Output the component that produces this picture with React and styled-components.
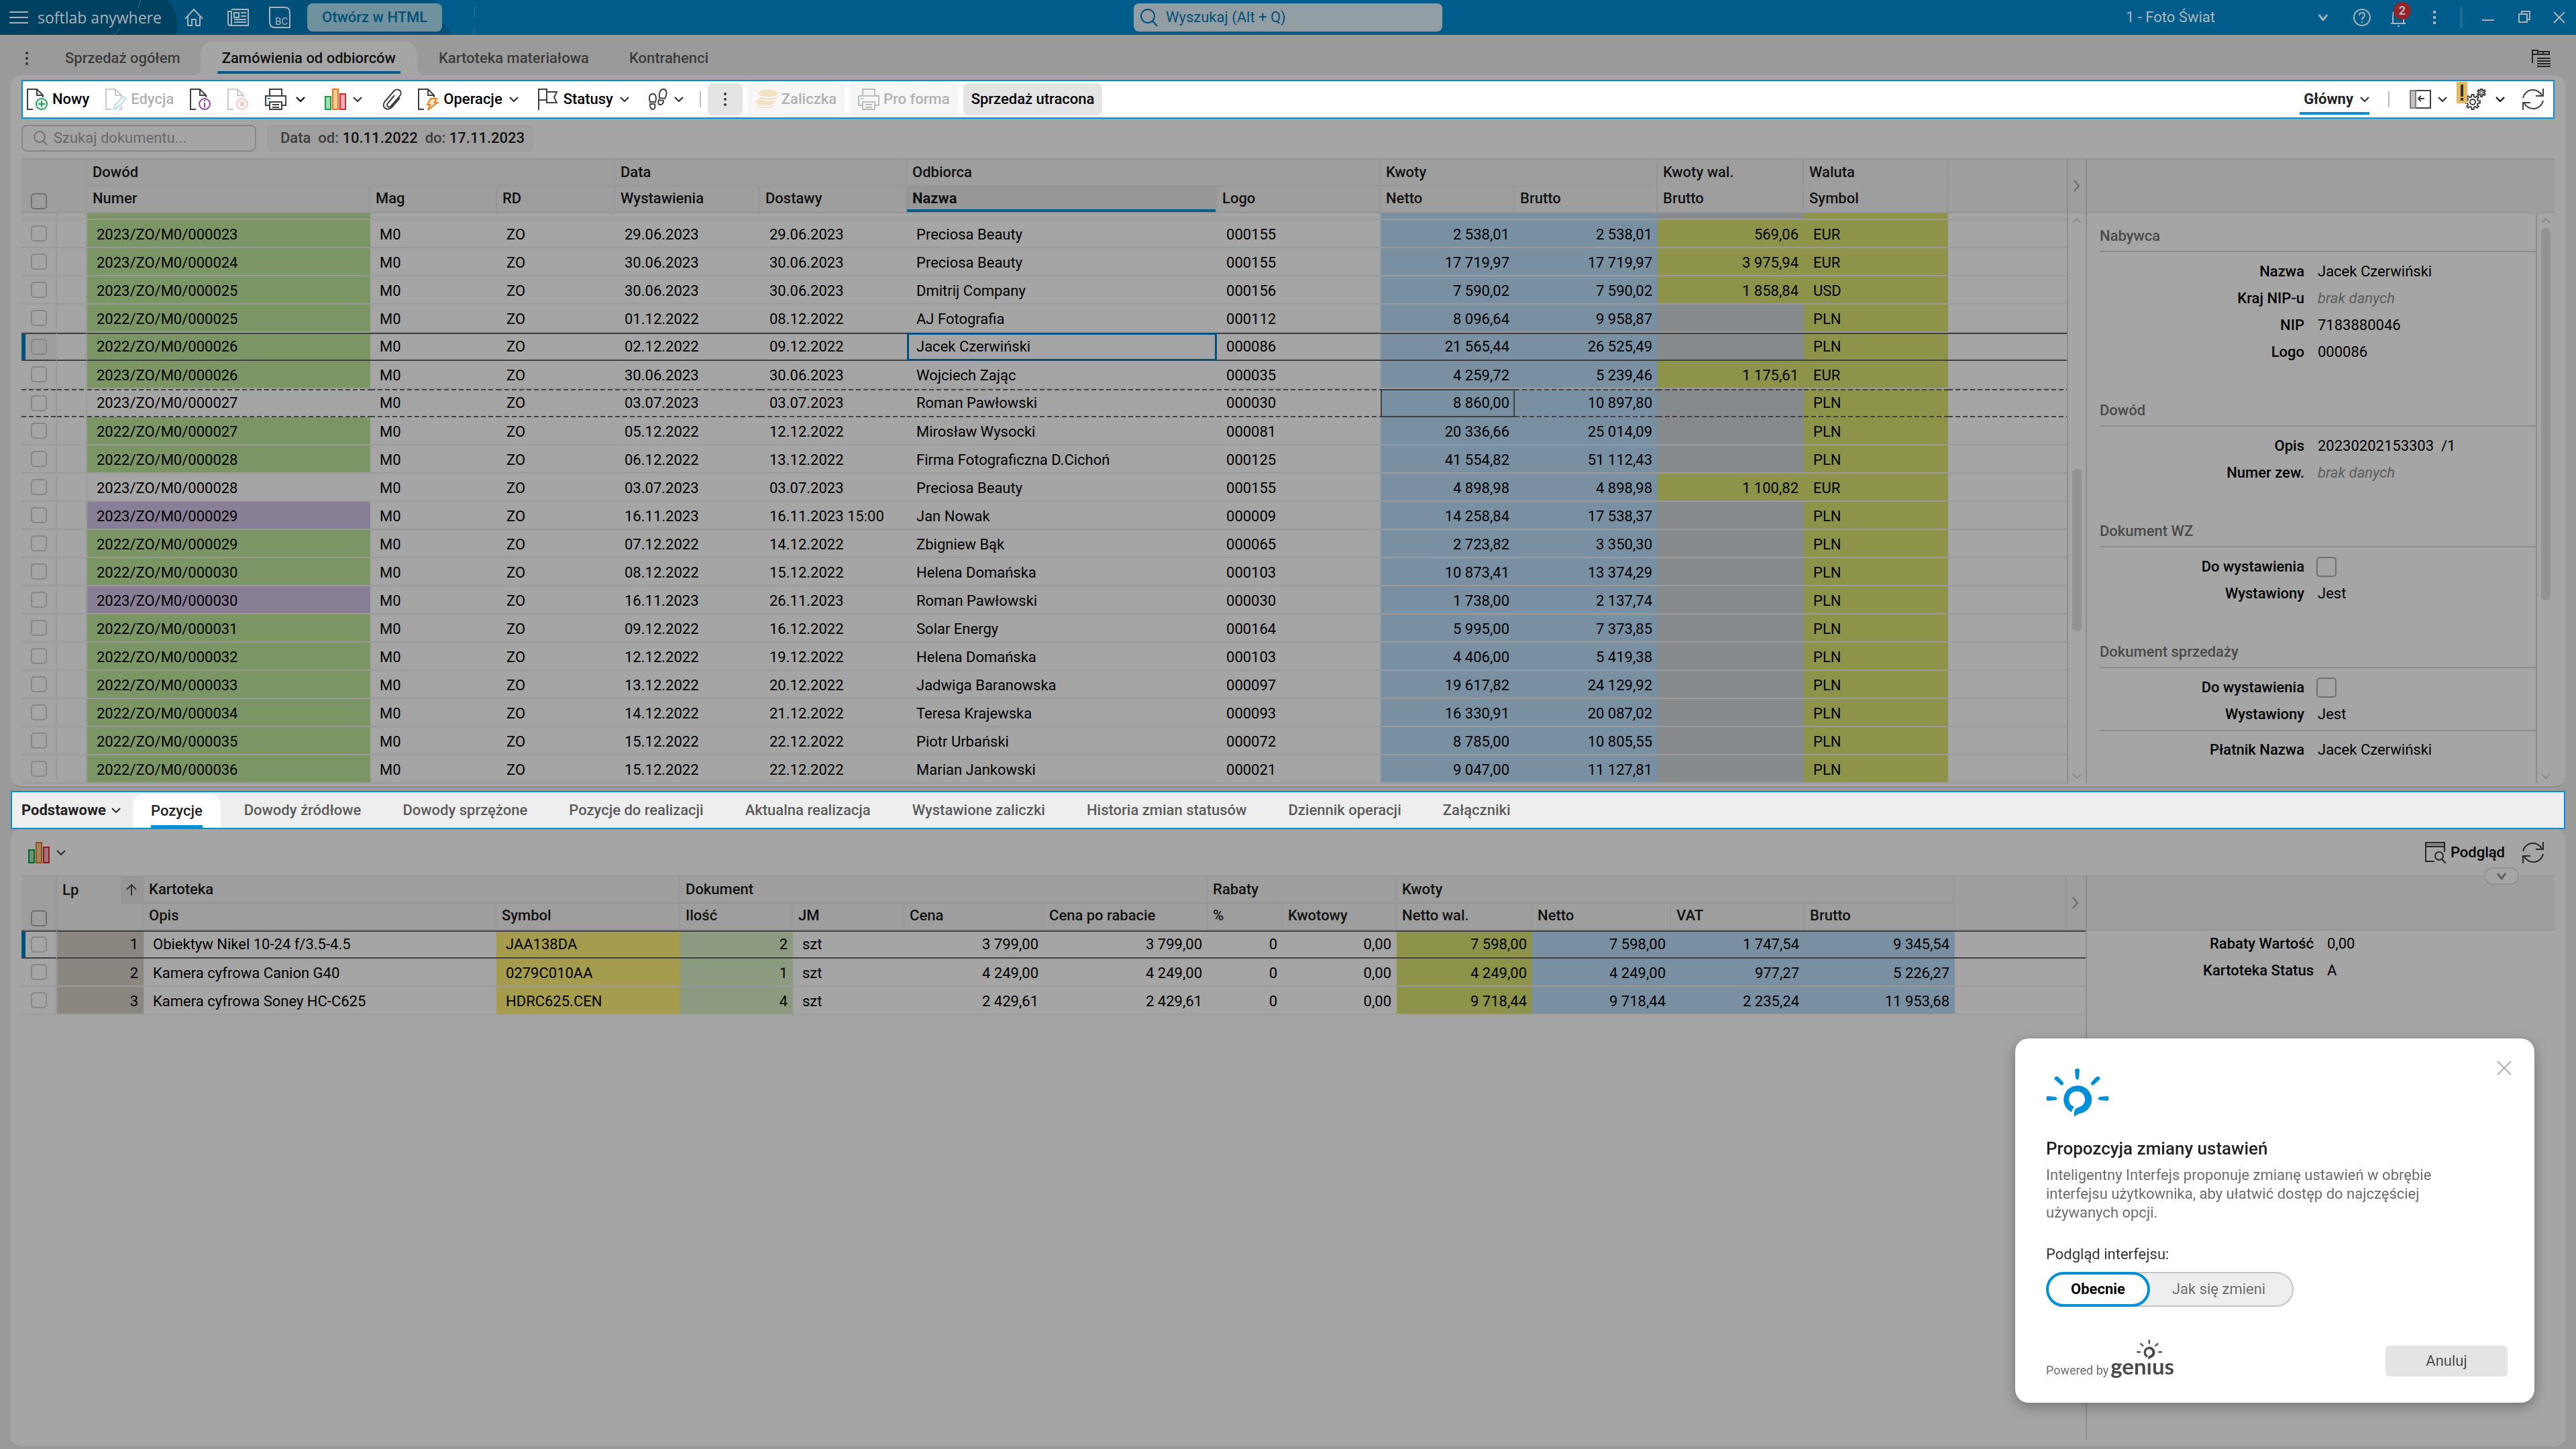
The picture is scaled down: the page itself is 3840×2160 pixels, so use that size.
import React from "react";
import styled, { createGlobalStyle, css } from "styled-components";

const c = {
  page: "#9a9a9a",
  panel: "#a5a5a5",
  head: "#9e9e9e",
  headActive: "#979797",
  line: "#9b9b9b",
  headLine: "#969696",
  edge: "#8c8c8c",
  ink: "#121212",
  accent: "#005e8c",
  bright: "#0090d7",
  light: "#a9b3b8",
  green: "#7b9664",
  purple: "#887e95",
  blue: "#7990a3",
  gray: "#868a8c",
  olive: "#8d944a",
  yellow: "#a59c4d",
  taupe: "#8a8680",
  sage: "#8c9a80",
};

const GlobalStyle = createGlobalStyle`
  * { box-sizing: border-box; }
  body {
    margin: 0;
    background: ${c.page};
    font-family: Roboto, "Liberation Sans", sans-serif;
    font-size: 22px;
    line-height: 28px;
    color: #000;
  }
  button, input, select {
    font: inherit;
    color: inherit;
  }
  button {
    border: 0;
    padding: 0;
    background: none;
  }
  svg { display: block; flex: none; }
`;

const Page = styled.div`
  min-height: 100vh;
  display: flex;
  flex-direction: column;
`;

/* ---------- top bar ---------- */

const TopBar = styled.header`
  position: relative;
  height: 52px;
  display: flex;
  align-items: center;
  background: #005c8a;
  color: ${c.light};
`;

const TopArt = styled.svg`
  position: absolute;
  left: 0;
  top: 0;
`;

const TopSide = styled.div`
  position: relative;
  flex: 1;
  display: flex;
  align-items: center;
  justify-content: ${(p) => (p.$end ? "flex-end" : "flex-start")};
`;

const MenuButton = styled.button`
  padding: 0 14px;
`;

const Brand = styled.span`
  font-family: "Open Sans", "Noto Sans", sans-serif;
  font-size: 23px;
  width: 200px;
  white-space: nowrap;
`;

const TopIcon = styled.button`
  width: ${(p) => p.$w || 54}px;
  height: 52px;
  display: flex;
  align-items: center;
  justify-content: center;
  position: relative;
`;

const OpenButton = styled.button`
  margin-left: 12px;
  height: 42px;
  padding: 0 22px;
  border-radius: 8px;
  background: #70929f;
  font-weight: 500;
  color: #00507a;
`;

const TopSearch = styled.label`
  position: relative;
  width: 460px;
  height: 42px;
  display: flex;
  align-items: center;
  gap: 12px;
  padding: 0 10px;
  border-radius: 8px;
  background: #939ea4;
  color: #00507a;
`;

const BareInput = styled.input`
  flex: 1;
  min-width: 0;
  border: 0;
  padding: 0;
  outline: 0;
  background: none;
  &::placeholder {
    color: ${(p) => p.$hint};
    opacity: 1;
  }
`;

const Company = styled.label`
  display: flex;
  align-items: center;
  margin-right: 24px;
  select {
    width: 287px;
    appearance: none;
    border: 0;
    padding: 0;
    background: none;
    color: #b0b7bb;
  }
`;

const Badge = styled.span`
  position: absolute;
  left: 20px;
  top: 3px;
  width: 26px;
  height: 26px;
  border-radius: 13px;
  background: #93252a;
  color: #b5b5b5;
  font-size: 18px;
  font-weight: 700;
  line-height: 26px;
  text-align: center;
`;

const TopDivider = styled.span`
  width: 4px;
  height: 32px;
  margin: 0 11px;
  background: #1f6c94;
`;

/* ---------- window tabs ---------- */

const Tabs = styled.nav`
  display: flex;
  height: 60px;
  padding: 10px 38px 0 16px;
  color: #3c3c3c;
`;

const TabsMenu = styled.button`
  width: 51px;
  padding-right: 3px;
  display: flex;
  align-items: center;
  justify-content: center;
`;

const Tab = styled.button`
  position: relative;
  padding: 0 ${(p) => (p.$active ? 32 : 30)}px;
  font-weight: 500;
  white-space: nowrap;
  ${(p) =>
    p.$active &&
    css`
      margin-right: 2px;
      background: ${c.panel};
      color: ${c.ink};
      border-radius: 18px 18px 0 0;
      &::before,
      &::after {
        content: "";
        position: absolute;
        bottom: 0;
        width: 8px;
        height: 14px;
      }
      &::before {
        right: 100%;
        background: radial-gradient(ellipse 8px 14px at 0 0, ${c.page} 98%, ${c.panel});
      }
      &::after {
        left: 100%;
        background: radial-gradient(ellipse 8px 14px at 100% 0, ${c.page} 98%, ${c.panel});
      }
    `}
`;

const TabMark = styled.span`
  position: absolute;
  left: 25px;
  right: 25px;
  bottom: 2px;
  height: 4px;
  background: ${c.accent};
`;

const Spacer = styled.span`
  flex: 1;
`;

/* ---------- panels and toolbars ---------- */

const Panel = styled.section`
  margin: 0 16px;
  padding: ${(p) => (p.$lower ? "0 16px 10px" : "7px 16px 4px")};
  background: ${c.panel};
  border-radius: 16px;
  border-bottom: 2px solid #8f8f8f;
  ${(p) =>
    p.$lower &&
    css`
      flex: 1;
      display: flex;
      flex-direction: column;
      margin-bottom: 2px;
      border-bottom-color: #969696;
    `}
`;

const Toolbar = styled.div`
  display: flex;
  align-items: center;
  height: 58px;
  padding: 0 14px 0 6px;
  border: 2px solid ${c.bright};
  background: #fff;
`;

const ToolGroup = styled.div`
  display: flex;
  align-items: center;
  gap: ${(p) => p.$gap}px;
`;

const Tool = styled.button`
  position: relative;
  display: flex;
  align-items: center;
  gap: 6px;
  font-weight: 500;
  white-space: nowrap;
  color: ${(p) => (p.disabled ? "#b1b1b1" : "#000")};
  ${(p) =>
    p.$filled &&
    css`
      height: 48px;
      padding: 0 12px;
      border-radius: 8px;
      background: ${p.disabled ? "#f6f6f6" : "#e4e4e4"};
    `}
`;

const Caret = styled.span`
  padding: 0 5px 0 4px;
`;

const Separator = styled.span`
  width: 2px;
  height: 24px;
  margin: ${(p) => p.$margin};
  background: #bdbdbd;
`;

const ViewName = styled.button`
  display: flex;
  align-items: center;
  gap: 10px;
  height: 46px;
  padding: 0 0 0 6px;
  border-top: 4px solid transparent;
  border-bottom: 4px solid ${c.bright};
  font-weight: 700;
  color: #222;
`;

const WarnBadge = styled.span`
  position: absolute;
  left: -12px;
  top: -10px;
`;

const Filters = styled.div`
  display: flex;
  gap: 16px;
  padding: 9px 0 10px;
`;

const DocSearch = styled.label`
  display: flex;
  align-items: center;
  gap: 8px;
  width: 350px;
  height: 40px;
  padding: 0 14px;
  border: 2px solid #868686;
  border-radius: 8px;
  color: #707070;
`;

const DateChip = styled.button`
  padding: 0 14px 0 20px;
  border-radius: 8px;
  background: #9f9f9f;
  font-weight: 500;
  color: #3c3c3c;
  white-space: pre;
  b {
    font-weight: 500;
    color: ${c.ink};
  }
`;

const LowerTools = styled.div`
  display: flex;
  align-items: center;
  height: 69px;
  padding: 0 16px 0 10px;
  gap: 26px;
`;

/* ---------- grids ---------- */

const Split = styled.div`
  position: relative;
  display: flex;
  flex: 1;
`;

const GridArea = styled.div`
  flex: 1;
  min-width: 0;
  overflow: hidden;
`;

const Grid = styled.table`
  width: 100%;
  table-layout: fixed;
  border-collapse: separate;
  border-spacing: 0;
`;

const HeadCell = styled.th`
  height: ${(p) => (p.$top ? 42 : 40)}px;
  padding: ${(p) => (p.$top ? "0 8px" : "0 8px 3px")};
  text-align: left;
  vertical-align: middle;
  font-weight: 500;
  white-space: nowrap;
  color: ${c.ink};
  background: ${c.head};
  border-right: 2px solid ${c.headLine};
  border-bottom: 2px solid ${(p) => (p.$open ? "transparent" : c.headLine)};
  ${(p) => p.$top && `border-top: 2px solid ${c.headLine};`}
  ${(p) => p.$last && "border-right: 0;"}
  ${(p) =>
    p.$active &&
    css`
      background: ${c.headActive};
      font-weight: 700;
      box-shadow: inset 0 -4px 0 ${c.accent};
    `}
`;

const CheckHead = styled(HeadCell)`
  padding: 0 0 4px 14px;
  vertical-align: bottom;
  line-height: 0;
`;

const LpHead = styled(HeadCell)`
  padding: 0 0 0 8px;
  vertical-align: top;
  div {
    display: flex;
    align-items: center;
    justify-content: space-between;
    height: 40px;
  }
  span {
    display: flex;
    align-items: center;
    height: 40px;
    padding: 0 8px;
    background: ${c.headActive};
    border-bottom: 2px solid ${c.headLine};
  }
`;

const dashes =
  "repeating-linear-gradient(90deg, #414141 0 7px, transparent 7px 11px)";

const Cell = styled.td`
  height: 42px;
  padding: 3px 8px 0 14px;
  overflow: hidden;
  white-space: nowrap;
  text-align: ${(p) => (p.$right ? "right" : "left")};
  border-bottom: 2px solid ${c.line};
  background-color: ${(p) => (p.$fill ? c[p.$fill] : "transparent")};
  background-clip: padding-box;
  ${(p) => p.$ruled && `border-right: 2px solid ${c.line};`}
  ${(p) =>
    p.$state === "selected" &&
    css`
      padding-top: 0;
      border-top: 2px solid #414141;
      border-bottom-color: #414141;
    `}
  ${(p) =>
    p.$state === "dashed" &&
    css`
      padding-top: 0;
      border-bottom: 0;
      background-clip: border-box;
      background-image: ${dashes}, ${dashes};
      background-size: 100% 2px;
      background-position: top, bottom;
      background-repeat: no-repeat;
    `}
`;

const FramedCell = styled(Cell)`
  padding-top: 0;
  border-top: 0;
  border-bottom: 0;
  box-shadow: inset 0 0 0 ${(p) => (p.$tone === "blue" ? "3px #00527c" : "2px #414141")};
`;

const CheckCell = styled(Cell)`
  padding: 0 0 0 14px;
  line-height: 0;
  ${(p) =>
    p.$state === "selected" &&
    css`
      background-color: ${(q) => (q.$plain ? c.panel : c.head)};
      box-shadow: inset 6px 0 0 #00527c;
    `}
`;

const ClippedCell = styled(Cell)`
  height: 10px;
  padding: 0;
`;

const Check = styled.input.attrs({ type: "checkbox" })`
  appearance: none;
  width: ${(p) => p.$size || 24}px;
  height: ${(p) => p.$size || 24}px;
  margin: 0;
  border: 2px solid ${(p) => p.$tone || "#868686"};
  border-radius: 5px;
`;

const Rail = styled.div`
  width: ${(p) => p.$w}px;
  display: flex;
  flex-direction: column;
  border-left: 2px solid ${c.edge};
`;

const RailHead = styled.div`
  height: 82px;
  display: flex;
  align-items: center;
  justify-content: center;
  background: ${c.head};
  border-top: 2px solid ${c.headLine};
  border-bottom: 2px solid ${c.headLine};
`;

const Track = styled.div`
  flex: 1;
  display: flex;
  flex-direction: column;
  align-items: center;
`;

const TrackArrow = styled.button`
  height: 22px;
  display: flex;
  align-items: center;
`;

const Thumb = styled.span`
  flex: ${(p) => p.$part};
  width: 14px;
  border-radius: 7px;
  background: ${(p) => (p.$empty ? "transparent" : "#929292")};
`;

/* ---------- details ---------- */

const Side = styled.aside`
  width: 699px;
  display: flex;
  flex-direction: column;
  border-left: 2px solid ${c.edge};
`;

const SideHead = styled.div`
  height: 82px;
  background: ${c.head};
  border-top: 2px solid ${c.headLine};
  border-bottom: 2px solid ${c.headLine};
`;

const SideBody = styled.div`
  flex: 1;
  display: flex;
`;

const Details = styled.div`
  flex: 1;
  padding: ${(p) => (p.$plain ? "0" : "14px 0 0 19px")};
`;

const SectionTitle = styled.h3`
  height: 44px;
  margin: 0 0 9px;
  padding-top: 6px;
  border-bottom: 2px solid ${c.edge};
  font-size: 22px;
  font-weight: 500;
  color: #4a4a4a;
`;

const Section = styled.div`
  margin-bottom: ${(p) => (p.$tight ? 0 : 47)}px;
  ${(p) =>
    p.$ruled &&
    css`
      margin-top: 3px;
      padding-top: 8px;
      border-top: 2px solid ${c.edge};
    `}
`;

const Field = styled.label`
  display: flex;
  align-items: center;
  height: 40px;
  span {
    width: ${(p) => p.$w || 305}px;
    margin-right: 20px;
    text-align: right;
    font-weight: 500;
  }
  output {
    white-space: pre;
  }
  i {
    color: #5c5c5c;
  }
  input {
    margin-left: -2px;
  }
`;

const CollapsePill = styled.button`
  position: absolute;
  right: 53px;
  top: -12px;
  width: 52px;
  height: 26px;
  display: flex;
  align-items: center;
  justify-content: center;
  border: 2px solid #919191;
  border-radius: 13px;
  background: ${c.panel};
`;

/* ---------- lower tabs ---------- */

const LowerTabs = styled.nav`
  display: flex;
  height: 57px;
  margin: 5px 16px 0;
  padding-left: 14px;
  border: 2px solid ${c.bright};
  background: #eee;
`;

const GroupSelect = styled.button`
  display: flex;
  align-items: center;
  gap: 8px;
  margin-right: 18px;
  font-weight: 700;
  color: #222;
`;

const LowerTab = styled.button`
  position: relative;
  padding: 0 ${(p) => (p.$active ? 27 : 31)}px;
  font-weight: 500;
  white-space: nowrap;
  color: #5b5b5b;
  ${(p) =>
    p.$active &&
    css`
      margin: 3px 4px 0 0;
      background: #fff;
      color: #222;
      border-radius: 16px 16px 0 0;
      span {
        left: 27px;
        right: 27px;
        bottom: 0;
        background: ${c.bright};
      }
    `}
`;

/* ---------- dialog ---------- */

const Dialog = styled.div`
  position: fixed;
  right: 62px;
  bottom: 69px;
  width: 774px;
  padding: 44px 40px 39px 46px;
  border-radius: 20px;
  background: #fff;
  box-shadow: 0 6px 20px rgba(0, 0, 0, 0.3);
`;

const DialogTop = styled.div`
  display: flex;
  justify-content: space-between;
  align-items: flex-start;
  margin-bottom: 30px;
  button {
    margin: -11px -6px 0 0;
    padding: 0;
  }
`;

const DialogTitle = styled.h2`
  margin: 0 0 10px;
  font-size: 26px;
  line-height: 32px;
  font-weight: 500;
  color: #222;
`;

const DialogText = styled.p`
  width: 620px;
  margin: 0 0 34px;
  color: #6b6b6b;
`;

const DialogLabel = styled.div`
  margin-bottom: 12px;
  color: #333;
`;

const Toggle = styled.div`
  display: inline-flex;
  height: 52px;
  border-radius: 26px;
  background: #eee;
  box-shadow: inset 0 0 0 2px #c4c4c4;
`;

const ToggleOption = styled.button`
  padding: 0 ${(p) => (p.$on ? 33 : 42)}px 0 ${(p) => (p.$on ? 33 : 33)}px;
  border-radius: 26px;
  color: #6b6b6b;
  ${(p) =>
    p.$on &&
    css`
      border: 4px solid ${c.bright};
      background: #fff;
      font-weight: 700;
      color: #000;
    `}
`;

const DialogFoot = styled.div`
  display: flex;
  align-items: flex-end;
  justify-content: space-between;
  margin-top: 58px;
`;

const Powered = styled.div`
  display: flex;
  align-items: baseline;
  margin-bottom: -4px;
  font-size: 18px;
  line-height: 26px;
  color: #6b6b6b;
`;

const Genius = styled.span`
  position: relative;
  margin-left: 3px;
  font-family: Lato, sans-serif;
  font-weight: 700;
  font-size: 33px;
  line-height: 34px;
  color: #4a4a4a;
  svg {
    position: absolute;
    left: 39px;
    bottom: 26px;
  }
`;

const CancelButton = styled.button`
  width: 182px;
  height: 46px;
  border-radius: 6px;
  background: #e4e4e4;
  color: #4a4a4a;
`;

/* ---------- icons ---------- */

const Icon = ({ w = 32, h = 32, stroke = "#3f3f3f", sw = 2, children, ...rest }) => (
  <svg
    width={w}
    height={h}
    viewBox={`0 0 ${w} ${h}`}
    fill="none"
    stroke={stroke}
    strokeWidth={sw}
    aria-hidden="true"
    {...rest}
  >
    {children}
  </svg>
);

const Chevron = ({ stroke = "#2a2a2a", sw = 2, w = 14, h = 8, up, right }) => {
  if (right) {
    return (
      <Icon w={10} h={18} stroke={stroke} sw={sw}>
        <path d="M1 1l7 8-7 8" />
      </Icon>
    );
  }
  return (
    <Icon w={w} h={h} stroke={stroke} sw={sw}>
      <path d={up ? `M1 ${h - 1}L${w / 2} 1l${w / 2 - 1} ${h - 2}` : `M1 1l${w / 2 - 1} ${h - 2}L${w - 1} 1`} />
    </Icon>
  );
};

const Dots = ({ fill = "#2c2c2c", square }) => (
  <Icon w={6} h={22} stroke="none">
    {[3, 11, 19].map((y) =>
      square ? (
        <rect key={y} x="1" y={y - 2} width="4" height="4" fill={fill} />
      ) : (
        <circle key={y} cx="3" cy={y} r="2" fill={fill} />
      )
    )}
  </Icon>
);

const Doc = ({ stroke = "#3f3f3f", children }) => (
  <Icon stroke={stroke}>
    <path d="M9 31H1V1h14l9 9v3M15 1v9h9" />
    {children}
  </Icon>
);

const NewDoc = () => (
  <Doc>
    <circle cx="22" cy="23" r="8" stroke="#12a551" />
    <path stroke="#12a551" d="M22 18v10M17 23h10" />
  </Doc>
);

const EditDoc = () => (
  <Doc stroke="#c9c9c9">
    <path stroke="#b9dcf0" d="M27 12l4 3-13 14-6 3 2-7zM14 25l4 4" />
    <path d="M20 31h4v-5" />
  </Doc>
);

const InfoDoc = () => (
  <Doc>
    <circle cx="22" cy="23" r="8" stroke="#9a3fa5" />
    <path stroke="#9a3fa5" d="M22 21v7M22 17v2" />
  </Doc>
);

const DeleteDoc = () => (
  <Doc stroke="#c9c9c9">
    <circle cx="22" cy="23" r="8" stroke="#f9c3c6" />
    <path stroke="#f9c3c6" strokeWidth="3" d="M19 20l6 6M25 20l-6 6" />
  </Doc>
);

const BoltDoc = () => (
  <Doc>
    <path stroke="#ef7d1a" fill="#fde3c6" d="M19 15h9l-3 6h4L15 32l3-8h-4z" />
  </Doc>
);

const Printer = ({ stroke = "#3f3f3f", dot = "#0090d7" }) => (
  <Icon stroke={stroke}>
    <path d="M7 11V1h18v10M7 25H1V11h30v14h-6M7 20h18v11H7zM11 24h10M11 28h10" />
    <rect x="4" y="14" width="4" height="2" fill={dot} stroke="none" />
  </Icon>
);

const Bars = ({ dim }) => {
  const k = dim
    ? ["#00682d", "#6d9078", "#97501c", "#a3835a", "#93191e", "#a0727a"]
    : ["#0f9d48", "#a9dcb9", "#e8731f", "#fbce8e", "#e3262f", "#f6b0b5"];
  return (
    <Icon>
      <rect x="1" y="12" width="8" height="19" stroke={k[0]} fill={k[1]} />
      <rect x="12" y="1" width="8" height="30" stroke={k[2]} fill={k[3]} />
      <rect x="23" y="8" width="8" height="23" stroke={k[4]} fill={k[5]} />
    </Icon>
  );
};

const Clip = () => (
  <Icon w={30}>
    <path d="M19 10L9 22c-3 4 2 8 5 4L27 11c5-7-3-13-9-7L5 19c-7 8 3 16 10 9l12-14" />
  </Icon>
);

const Flag = () => (
  <Icon>
    <path d="M1 32V1h12v16H1M13 5h15l-4 8 4 8H13v-4" />
  </Icon>
);

const Feet = () => (
  <Icon w={28}>
    <path d="M2 20C0 14 1 8 6 8s6 6 4 12zM2 23h7c1 5 0 8-3 8s-4-3-4-8zM16 14C15 7 17 1 22 1s6 7 2 14zM15 17l7 1c0 4-2 6-5 6s-3-3-2-7z" />
  </Icon>
);

const Coins = () => (
  <Icon stroke="none">
    <g fill="#f4e1c3">
      <path d="M4 6c0-2 5-4 14-4s14 2 14 4v2c0 2-5 4-14 4S4 10 4 8z" />
      <path d="M5 12c4 3 22 3 27 0 0 4-5 5-14 5S5 16 5 12z" />
      <path d="M0 19c0-2 2-3 5-3 7 3 15 3 22 2l1 1v2c0 2-5 4-14 4S0 23 0 21z" />
      <path d="M1 25c5 3 21 3 26 0 0 3-4 4-13 4S1 28 1 25z" />
    </g>
  </Icon>
);

const PanelIcon = () => (
  <Icon h={28}>
    <rect x="1" y="1" width="30" height="26" />
    <rect x="1" y="1" width="8" height="26" fill="#c4c0c0" stroke="#7d7d7d" />
    <path d="M22 13H13M17 9l-4 4 4 4" />
  </Icon>
);

// outline of a cog with the given number of teeth
const cog = (cx, cy, inner, outer, teeth) => {
  const points = [];
  const step = (Math.PI * 2) / teeth;
  for (let i = 0; i < teeth; i++) {
    [
      [-0.3, inner],
      [-0.18, outer],
      [0.18, outer],
      [0.3, inner],
    ].forEach(([t, r]) => {
      const a = (i + t) * step;
      points.push(`${(cx + Math.sin(a) * r).toFixed(1)} ${(cy - Math.cos(a) * r).toFixed(1)}`);
    });
  }
  return `M${points.join("L")}Z`;
};

const Cogs = () => (
  <Icon>
    <path d={cog(12, 20, 8, 11, 8)} />
    <circle cx="12" cy="20" r="4" />
    <path d={cog(25, 6, 4, 6, 6)} />
    <circle cx="25" cy="6" r="2" strokeWidth="1" />
  </Icon>
);

const Refresh = ({ stroke = "#3f3f3f" }) => (
  <Icon stroke={stroke}>
    <path d="M1 14A15 15 0 0 1 29 10M31 0v11H20M31 18A15 15 0 0 1 3 22M1 32V21h11" />
  </Icon>
);

const Preview = () => (
  <Icon stroke="#262626">
    <path d="M14 29H1V1h28v14M1 7h28" />
    <path d="M2 4h26" strokeWidth="2" stroke="#777" />
    <circle cx="21" cy="21" r="6" />
    <path d="M25 26l6 6" />
  </Icon>
);

const Search = ({ stroke, w = 26 }) => (
  <Icon w={w} h={28} stroke={stroke}>
    <circle cx="11" cy="12" r={w > 24 ? 10 : 8} />
    <path d={w > 24 ? "M18 19l7 8" : "M16 18l6 6"} />
  </Icon>
);

const Cross = ({ stroke, s = 20 }) => (
  <Icon w={s} h={s} stroke={stroke}>
    <path d={`M1 1l${s - 2} ${s - 2}M${s - 1} 1L1 ${s - 1}`} />
  </Icon>
);

const Bulb = ({ w, h, fill }) => (
  <svg width={w} height={h} viewBox="0 0 94 74" fill={fill} aria-hidden="true">
    <path d="M43 3q4-5 7 0l-1 12q-2 5-5 0z" />
    <path d="M13 14q3-3 6 0l7 8q0 4-3 4l-8-7q-4-3-2-5z" />
    <path d="M80 14q-3-3-6 0l-7 8q0 4 3 4l8-7q4-3 2-5z" />
    <path d="M2 42q-3 3 0 7l12-1q5-2 0-5z" />
    <path d="M92 42q3 3 0 7l-12-1q-5-2 0-5z" />
    <path d="M38 66A21 21 0 1 1 54 67Q47 68 42 73q-1-9 2-12 3-2 6-3a12 12 0 1 0-8 0q-3 3-4 8z" />
  </svg>
);

/* ---------- data ---------- */

const orders = [
  ["2023/ZO/M0/000023", "green", "29.06.2023", "29.06.2023", "Preciosa Beauty", "000155", "2 538,01", "2 538,01", "569,06", "EUR"],
  ["2023/ZO/M0/000024", "green", "30.06.2023", "30.06.2023", "Preciosa Beauty", "000155", "17 719,97", "17 719,97", "3 975,94", "EUR"],
  ["2023/ZO/M0/000025", "green", "30.06.2023", "30.06.2023", "Dmitrij Company", "000156", "7 590,02", "7 590,02", "1 858,84", "USD"],
  ["2022/ZO/M0/000025", "green", "01.12.2022", "08.12.2022", "AJ Fotografia", "000112", "8 096,64", "9 958,87", "", "PLN"],
  ["2022/ZO/M0/000026", "green", "02.12.2022", "09.12.2022", "Jacek Czerwiński", "000086", "21 565,44", "26 525,49", "", "PLN", "selected"],
  ["2023/ZO/M0/000026", "green", "30.06.2023", "30.06.2023", "Wojciech Zając", "000035", "4 259,72", "5 239,46", "1 175,61", "EUR"],
  ["2023/ZO/M0/000027", "", "03.07.2023", "03.07.2023", "Roman Pawłowski", "000030", "8 860,00", "10 897,80", "", "PLN", "dashed"],
  ["2022/ZO/M0/000027", "green", "05.12.2022", "12.12.2022", "Mirosław Wysocki", "000081", "20 336,66", "25 014,09", "", "PLN"],
  ["2022/ZO/M0/000028", "green", "06.12.2022", "13.12.2022", "Firma Fotograficzna D.Cichoń", "000125", "41 554,82", "51 112,43", "", "PLN"],
  ["2023/ZO/M0/000028", "", "03.07.2023", "03.07.2023", "Preciosa Beauty", "000155", "4 898,98", "4 898,98", "1 100,82", "EUR"],
  ["2023/ZO/M0/000029", "purple", "16.11.2023", "16.11.2023 15:00", "Jan Nowak", "000009", "14 258,84", "17 538,37", "", "PLN"],
  ["2022/ZO/M0/000029", "green", "07.12.2022", "14.12.2022", "Zbigniew Bąk", "000065", "2 723,82", "3 350,30", "", "PLN"],
  ["2022/ZO/M0/000030", "green", "08.12.2022", "15.12.2022", "Helena Domańska", "000103", "10 873,41", "13 374,29", "", "PLN"],
  ["2023/ZO/M0/000030", "purple", "16.11.2023", "26.11.2023", "Roman Pawłowski", "000030", "1 738,00", "2 137,74", "", "PLN"],
  ["2022/ZO/M0/000031", "green", "09.12.2022", "16.12.2022", "Solar Energy", "000164", "5 995,00", "7 373,85", "", "PLN"],
  ["2022/ZO/M0/000032", "green", "12.12.2022", "19.12.2022", "Helena Domańska", "000103", "4 406,00", "5 419,38", "", "PLN"],
  ["2022/ZO/M0/000033", "green", "13.12.2022", "20.12.2022", "Jadwiga Baranowska", "000097", "19 617,82", "24 129,92", "", "PLN"],
  ["2022/ZO/M0/000034", "green", "14.12.2022", "21.12.2022", "Teresa Krajewska", "000093", "16 330,91", "20 087,02", "", "PLN"],
  ["2022/ZO/M0/000035", "green", "15.12.2022", "22.12.2022", "Piotr Urbański", "000072", "8 785,00", "10 805,55", "", "PLN"],
  ["2022/ZO/M0/000036", "green", "15.12.2022", "22.12.2022", "Marian Jankowski", "000021", "9 047,00", "11 127,81", "", "PLN"],
];

const items = [
  ["1", "Obiektyw Nikel 10-24 f/3.5-4.5", "JAA138DA", "2", "3 799,00", "7 598,00", "7 598,00", "1 747,54", "9 345,54"],
  ["2", "Kamera cyfrowa Canion G40", "0279C010AA", "1", "4 249,00", "4 249,00", "4 249,00", "977,27", "5 226,27"],
  ["3", "Kamera cyfrowa Soney HC-C625", "HDRC625.CEN", "4", "2 429,61", "9 718,44", "9 718,44", "2 235,24", "11 953,68"],
];

const orderCols = [53, 45, 422, 189, 176, 216, 219, 462, 244, 200, 213, 218, 215];
const itemCols = [53, 129, 526, 274, 168, 166, 208, 244, 112, 170, 202, 207, 199, 224];

const lowerTabs = [
  "Dowody źródłowe",
  "Dowody sprzężone",
  "Pozycje do realizacji",
  "Aktualna realizacja",
  "Wystawione zaliczki",
  "Historia zmian statusów",
  "Dziennik operacji",
  "Załączniki",
];

/* ---------- parts ---------- */

const Columns = ({ widths, last }) => (
  <colgroup>
    {widths.map((w, i) => (
      <col key={i} style={{ width: w }} />
    ))}
    <col />
    {last && <col style={{ width: last }} />}
  </colgroup>
);

const OrderRow = ({ row }) => {
  const [number, tone, issued, delivery, name, logo, net, gross, foreign, currency, state] = row;
  return (
    <tr>
      <CheckCell $state={state} $ruled>
        <Check aria-label={number} />
      </CheckCell>
      <Cell $state={state} $ruled />
      <Cell $state={state} $fill={tone}>{number}</Cell>
      <Cell $state={state}>M0</Cell>
      <Cell $state={state}>ZO</Cell>
      <Cell $state={state}>{issued}</Cell>
      <Cell $state={state}>{delivery}</Cell>
      {state === "selected" ? (
        <FramedCell $tone="blue">{name}</FramedCell>
      ) : (
        <Cell $state={state}>{name}</Cell>
      )}
      <Cell $state={state}>{logo}</Cell>
      {state === "dashed" ? (
        <FramedCell $fill="blue" $right>{net}</FramedCell>
      ) : (
        <Cell $state={state} $fill="blue" $right>{net}</Cell>
      )}
      <Cell $state={state} $fill="blue" $right>{gross}</Cell>
      <Cell $state={state} $fill={foreign ? "olive" : "gray"} $right>{foreign}</Cell>
      <Cell $state={state} $fill="olive">{currency}</Cell>
      <Cell $state={state} />
    </tr>
  );
};

const OrdersGrid = () => (
  <Grid>
    <Columns widths={orderCols} />
    <thead>
      <tr>
        <CheckHead $top rowSpan={2} colSpan={2}>
          <Check $tone="#707070" aria-label="Zaznacz wszystkie dokumenty" />
        </CheckHead>
        <HeadCell $top colSpan={3}>Dowód</HeadCell>
        <HeadCell $top colSpan={2}>Data</HeadCell>
        <HeadCell $top colSpan={2}>Odbiorca</HeadCell>
        <HeadCell $top colSpan={2}>Kwoty</HeadCell>
        <HeadCell $top $open>Kwoty wal.</HeadCell>
        <HeadCell $top $open>Waluta</HeadCell>
        <HeadCell $top $last rowSpan={2} />
      </tr>
      <tr>
        <HeadCell>Numer</HeadCell>
        <HeadCell>Mag</HeadCell>
        <HeadCell>RD</HeadCell>
        <HeadCell>Wystawienia</HeadCell>
        <HeadCell>Dostawy</HeadCell>
        <HeadCell $active>Nazwa</HeadCell>
        <HeadCell>Logo</HeadCell>
        <HeadCell>Netto</HeadCell>
        <HeadCell>Brutto</HeadCell>
        <HeadCell>Brutto</HeadCell>
        <HeadCell>Symbol</HeadCell>
      </tr>
    </thead>
    <tbody>
      <tr>
        <ClippedCell $ruled />
        <ClippedCell $ruled />
        <ClippedCell $fill="green" />
        <ClippedCell colSpan={6} />
        <ClippedCell $fill="blue" colSpan={2} />
        <ClippedCell $fill="gray" />
        <ClippedCell $fill="olive" />
        <ClippedCell />
      </tr>
      {orders.map((row) => (
        <OrderRow key={row[0]} row={row} />
      ))}
    </tbody>
  </Grid>
);

const ItemsGrid = () => (
  <Grid>
    <Columns widths={itemCols} last={28} />
    <thead>
      <tr>
        <CheckHead $top rowSpan={2}>
          <Check $tone="#707070" aria-label="Zaznacz wszystkie pozycje" />
        </CheckHead>
        <LpHead $top rowSpan={2}>
          <div>
            Lp
            <span>
              <Icon w={16} h={18} stroke="#333">
                <path d="M8 18V2M1 9l7-7 7 7" />
              </Icon>
            </span>
          </div>
        </LpHead>
        <HeadCell $top colSpan={2}>Kartoteka</HeadCell>
        <HeadCell $top colSpan={4}>Dokument</HeadCell>
        <HeadCell $top colSpan={2}>Rabaty</HeadCell>
        <HeadCell $top colSpan={4}>Kwoty</HeadCell>
        <HeadCell $top rowSpan={2} />
        <HeadCell $top $last rowSpan={2}>
          <Chevron right stroke="#6a6a6a" />
        </HeadCell>
      </tr>
      <tr>
        <HeadCell>Opis</HeadCell>
        <HeadCell>Symbol</HeadCell>
        <HeadCell>Ilość</HeadCell>
        <HeadCell>JM</HeadCell>
        <HeadCell>Cena</HeadCell>
        <HeadCell>Cena po rabacie</HeadCell>
        <HeadCell>%</HeadCell>
        <HeadCell>Kwotowy</HeadCell>
        <HeadCell>Netto wal.</HeadCell>
        <HeadCell>Netto</HeadCell>
        <HeadCell>VAT</HeadCell>
        <HeadCell>Brutto</HeadCell>
      </tr>
    </thead>
    <tbody>
      {items.map(([lp, name, symbol, count, price, netCur, net, vat, gross], i) => {
        const state = i === 0 ? "selected" : "";
        return (
          <tr key={lp}>
            <CheckCell $state={state} $plain $ruled>
              <Check aria-label={name} />
            </CheckCell>
            <Cell $state={state} $fill="taupe" $right>{lp}</Cell>
            <Cell $state={state}>{name}</Cell>
            <Cell $state={state} $fill="yellow">{symbol}</Cell>
            <Cell $state={state} $fill="sage" $right>{count}</Cell>
            <Cell $state={state}>szt</Cell>
            <Cell $state={state} $right>{price}</Cell>
            <Cell $state={state} $right>{price}</Cell>
            <Cell $state={state} $right>0</Cell>
            <Cell $state={state} $right>0,00</Cell>
            <Cell $state={state} $fill="olive" $right>{netCur}</Cell>
            <Cell $state={state} $fill="blue" $right>{net}</Cell>
            <Cell $state={state} $fill="blue" $right>{vat}</Cell>
            <Cell $state={state} $fill="blue" $right>{gross}</Cell>
            <Cell $state={state} colSpan={2} />
          </tr>
        );
      })}
    </tbody>
  </Grid>
);

const Scroll = ({ before, size, after }) => (
  <Track>
    <TrackArrow aria-label="W górę"><Chevron up stroke="#8a8a8a" /></TrackArrow>
    <Thumb $empty $part={before} />
    <Thumb $part={size} />
    <Thumb $empty $part={after} />
    <TrackArrow aria-label="W dół"><Chevron stroke="#8a8a8a" /></TrackArrow>
  </Track>
);

const Row = ({ label, value, w }) => (
  <Field $w={w}>
    <span>{label}</span>
    {value === undefined ? <Check $size={30} $tone="#6f6f6f" /> : <output>{value || <i>brak danych</i>}</output>}
  </Field>
);

const OrderDetails = () => (
  <Side>
    <SideHead />
    <SideBody>
      <Details>
        <Section>
          <SectionTitle>Nabywca</SectionTitle>
          <Row label="Nazwa" value="Jacek Czerwiński" />
          <Row label="Kraj NIP-u" value="" />
          <Row label="NIP" value="7183880046" />
          <Row label="Logo" value="000086" />
        </Section>
        <Section>
          <SectionTitle>Dowód</SectionTitle>
          <Row label="Opis" value="20230202153303  /1" />
          <Row label="Numer zew." value="" />
        </Section>
        <Section>
          <SectionTitle>Dokument WZ</SectionTitle>
          <Row label="Do wystawienia" />
          <Row label="Wystawiony" value="Jest" />
        </Section>
        <Section $tight>
          <SectionTitle>Dokument sprzedaży</SectionTitle>
          <Row label="Do wystawienia" />
          <Row label="Wystawiony" value="Jest" />
        </Section>
        <Section $tight $ruled>
          <Row label="Płatnik Nazwa" value="Jacek Czerwiński" />
        </Section>
      </Details>
      <Rail $w={28}>
        <Scroll before={0} size={555} after={251} />
      </Rail>
    </SideBody>
  </Side>
);

const Header = () => (
  <TopBar>
    <TopArt width="720" height="52" aria-hidden="true">
      <path d="M0 0H645Q652 26 674 52H0Z" fill="#005079" />
      <path d="M0 0H250Q270 26 262 52H0Z" fill="#004162" />
      <path d="M210 0l-4 12M179 42l-9 10M708 10l-1 16M707 39v13" stroke="#3a7594" />
    </TopArt>
    <TopSide>
      <MenuButton aria-label="Menu">
        <Icon w={28} h={18} stroke={c.light}>
          <path d="M0 1h28M0 9h28M0 17h28" />
        </Icon>
      </MenuButton>
      <Brand>softlab anywhere</Brand>
      <TopIcon $w={66} aria-label="Start">
        <Icon w={28} h={28} stroke={c.light}>
          <path d="M1 16L14 2l13 14M5 13v13h6v-9h6v9h6V13" />
        </Icon>
      </TopIcon>
      <TopIcon $w={66} aria-label="Aktualności">
        <Icon w={32} h={26} stroke={c.light}>
          <path d="M6 1h25v24H4q-3 0-3-4V4h5v17q0 3-2 4M10 6h7v7h-7zM20 6h8M20 11h8M10 16h18M10 20h18" />
        </Icon>
      </TopIcon>
      <TopIcon $w={58} aria-label="BC">
        <svg width="32" height="32" viewBox="0 0 32 32" aria-hidden="true">
          <path d="M1 1h22q8 0 8 8v22H9q-8 0-8-8z" fill="none" stroke={c.light} strokeWidth="2" />
          <text x="9" y="27" fontSize="15" fontFamily="Roboto" fill={c.light}>BC</text>
        </svg>
      </TopIcon>
      <OpenButton>Otwórz w HTML</OpenButton>
    </TopSide>
    <TopSearch>
      <Search stroke="#00507a" />
      <BareInput aria-label="Wyszukaj" placeholder="Wyszukaj (Alt + Q)" $hint="#00507a" />
    </TopSearch>
    <TopSide $end>
      <Company>
        <select aria-label="Firma">
          <option>1 - Foto Świat</option>
        </select>
        <Chevron stroke={c.light} sw={3} h={10} />
      </Company>
      <TopIcon aria-label="Pomoc">
        <svg width="28" height="28" viewBox="0 0 28 28" aria-hidden="true" fill="none" stroke={c.light} strokeWidth="2">
          <circle cx="14" cy="14" r="12" />
          <path d="M10 11q0-4 4-4t4 4q0 2-2 3t-2 4M14 20v2" />
        </svg>
      </TopIcon>
      <TopIcon aria-label="Powiadomienia">
        <Icon w={24} h={30} stroke={c.light}>
          <path d="M1 24h22M4 24V12q0-8 8-8t8 8v12M11 28h3" />
        </Icon>
        <Badge>2</Badge>
      </TopIcon>
      <TopIcon aria-label="Więcej"><Dots square fill={c.light} /></TopIcon>
      <TopDivider />
      <TopIcon aria-label="Minimalizuj">
        <Icon w={18} h={10} stroke={c.light}><path d="M0 9h18" /></Icon>
      </TopIcon>
      <TopIcon aria-label="Przywróć">
        <Icon w={18} h={22} stroke={c.light}>
          <path d="M1 6h12v12H1zM5 6V2h12v12h-4" />
        </Icon>
      </TopIcon>
      <TopIcon $w={50} aria-label="Zamknij"><Cross stroke={c.light} s={18} /></TopIcon>
    </TopSide>
  </TopBar>
);

const WindowTabs = () => (
  <Tabs>
    <TabsMenu aria-label="Menu zakładek"><Dots /></TabsMenu>
    <Tab>Sprzedaż ogółem</Tab>
    <Tab $active>
      Zamówienia od odbiorców
      <TabMark />
    </Tab>
    <Tab>Kartoteka materiałowa</Tab>
    <Tab>Kontrahenci</Tab>
    <Spacer />
    <button aria-label="Układ zakładek">
      <Icon w={28} h={26} stroke="#222">
        <path d="M1 20V1h8v6H1M9 3h17v4H9M17 3v4M8 13h20M8 17h20M8 21h20M8 25h20" />
      </Icon>
    </button>
  </Tabs>
);

const MainToolbar = () => (
  <Toolbar>
    <ToolGroup $gap={24}>
      <Tool><NewDoc />Nowy</Tool>
      <Tool disabled><EditDoc />Edycja</Tool>
      <Tool aria-label="Informacje"><InfoDoc /></Tool>
      <Tool disabled aria-label="Usuń"><DeleteDoc /></Tool>
      <ToolGroup $gap={10}>
        <Tool aria-label="Drukuj"><Printer /></Tool>
        <Tool aria-label="Opcje druku"><Caret><Chevron stroke="#000" /></Caret></Tool>
      </ToolGroup>
      <ToolGroup $gap={6}>
        <Tool aria-label="Wykresy"><Bars /></Tool>
        <Tool aria-label="Opcje wykresów"><Caret><Chevron /></Caret></Tool>
      </ToolGroup>
      <Tool aria-label="Załączniki"><Clip /></Tool>
      <Tool><BoltDoc />Operacje<Caret><Chevron /></Caret></Tool>
      <Tool><Flag />Statusy<Caret><Chevron /></Caret></Tool>
      <Tool aria-label="Historia"><Feet /><Caret><Chevron /></Caret></Tool>
    </ToolGroup>
    <Separator $margin="0 10px 0 19px" />
    <ToolGroup $gap={8}>
      <Tool $filled aria-label="Więcej">
        <Icon w={28} h={22} stroke="none">
          {[3, 11, 19].map((y) => (
            <circle key={y} cx="14" cy={y} r="2" fill="#333" />
          ))}
        </Icon>
      </Tool>
      <Tool $filled disabled><Coins />Zaliczka</Tool>
      <Tool $filled disabled><Printer stroke="#bcbcbc" dot="#9bd0ee" />Pro forma</Tool>
      <Tool $filled>Sprzedaż utracona</Tool>
    </ToolGroup>
    <Spacer />
    <ViewName>Główny <Chevron /></ViewName>
    <Separator $margin="0 30px 0 28px" />
    <ToolGroup $gap={26}>
      <ToolGroup $gap={10}>
        <Tool aria-label="Panel boczny"><PanelIcon /></Tool>
        <Tool aria-label="Opcje panelu"><Chevron /></Tool>
      </ToolGroup>
      <ToolGroup $gap={14}>
        <Tool aria-label="Ustawienia">
          <Cogs />
          <WarnBadge>
            <svg width="16" height="32" viewBox="0 0 16 32" aria-hidden="true">
              <rect width="16" height="32" fill="#e2b860" />
              <path d="M6 4h4v18H6zM6 24h4v4H6z" fill="#333" />
            </svg>
          </WarnBadge>
        </Tool>
        <Tool aria-label="Opcje ustawień"><Chevron stroke="#000" /></Tool>
      </ToolGroup>
      <Tool aria-label="Odśwież"><Refresh /></Tool>
    </ToolGroup>
  </Toolbar>
);

const Proposal = () => (
  <Dialog role="dialog" aria-labelledby="proposal-title">
    <DialogTop>
      <Bulb w={94} h={74} fill={c.bright} />
      <button aria-label="Zamknij"><Cross stroke="#b0b0b0" s={22} /></button>
    </DialogTop>
    <DialogTitle id="proposal-title">Propozcyja zmiany ustawień</DialogTitle>
    <DialogText>
      Inteligentny Interfejs proponuje zmianę ustawień w obrębie interfejsu użytkownika, aby ułatwić dostęp do
      najczęściej używanych opcji.
    </DialogText>
    <DialogLabel>Podgląd interfejsu:</DialogLabel>
    <Toggle>
      <ToggleOption $on>Obecnie</ToggleOption>
      <ToggleOption>Jak się zmieni</ToggleOption>
    </Toggle>
    <DialogFoot>
      <Powered>
        Powered by
        <Genius>
          genıus
          <Bulb w={38} h={30} fill="#4a4a4a" />
        </Genius>
      </Powered>
      <CancelButton>Anuluj</CancelButton>
    </DialogFoot>
  </Dialog>
);

const App = () => (
  <Page>
    <GlobalStyle />
    <Header />
    <WindowTabs />
    <Panel>
      <MainToolbar />
      <Filters>
        <DocSearch>
          <Search stroke="#707070" w={24} />
          <BareInput aria-label="Szukaj dokumentu" placeholder="Szukaj dokumentu..." $hint="#686868" />
        </DocSearch>
        <DateChip>
          Data  od: <b>10.11.2022</b>  do: <b>17.11.2023</b>
        </DateChip>
      </Filters>
      <Split>
        <GridArea>
          <OrdersGrid />
        </GridArea>
        <Rail $w={28}>
          <RailHead><Chevron right stroke="#6a6a6a" /></RailHead>
          <Scroll before={359} size={242} after={205} />
        </Rail>
        <OrderDetails />
      </Split>
    </Panel>
    <LowerTabs>
      <GroupSelect>Podstawowe <Chevron /></GroupSelect>
      <LowerTab $active>
        Pozycje
        <TabMark />
      </LowerTab>
      {lowerTabs.map((name) => (
        <LowerTab key={name}>{name}</LowerTab>
      ))}
    </LowerTabs>
    <Panel $lower>
      <LowerTools>
        <ToolGroup $gap={10}>
          <Tool aria-label="Wykresy pozycji"><Bars dim /></Tool>
          <Tool aria-label="Opcje wykresów pozycji"><Chevron /></Tool>
        </ToolGroup>
        <Spacer />
        <Tool><Preview />Podgląd</Tool>
        <Tool aria-label="Odśwież pozycje"><Refresh stroke="#262626" /></Tool>
      </LowerTools>
      <Split>
        <GridArea>
          <ItemsGrid />
        </GridArea>
        <Side>
          <SideHead />
          <Details $plain>
            <Row w={338} label="Rabaty Wartość" value="0,00" />
            <Row w={338} label="Kartoteka Status" value="A" />
          </Details>
        </Side>
        <CollapsePill aria-label="Zwiń"><Chevron stroke="#5f5f5f" sw={3} h={10} /></CollapsePill>
      </Split>
    </Panel>
    <Proposal />
  </Page>
);

export default App;
